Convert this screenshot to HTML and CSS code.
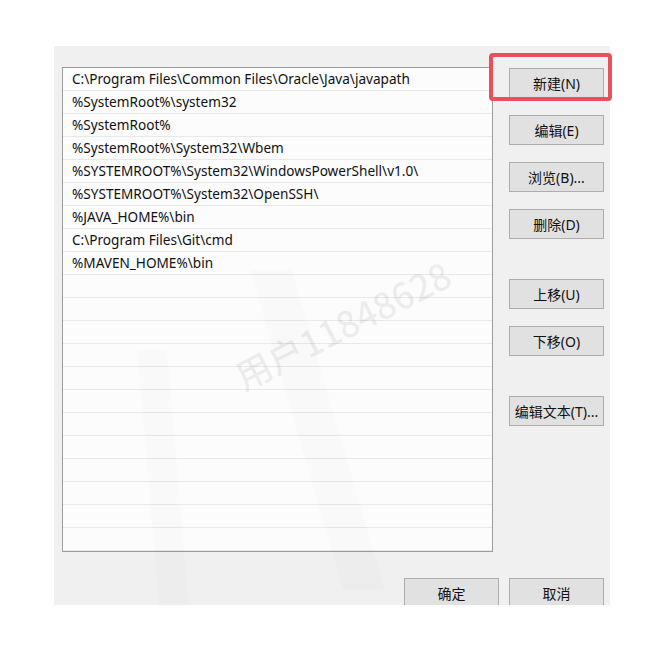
FILE: index.html
```html
<!DOCTYPE html>
<html lang="zh-CN">
<head>
  <meta charset="UTF-8">
  <title>编辑环境变量</title>
  <link rel="stylesheet" href="styles.css">
</head>
<body>

  <div class="dialog">
    <div class="main">
      <div class="list">
        <div class="row">C:\Program Files\Common Files\Oracle\Java\javapath</div>
        <div class="row">%SystemRoot%\system32</div>
        <div class="row">%SystemRoot%</div>
        <div class="row">%SystemRoot%\System32\Wbem</div>
        <div class="row">%SYSTEMROOT%\System32\WindowsPowerShell\v1.0\</div>
        <div class="row">%SYSTEMROOT%\System32\OpenSSH\</div>
        <div class="row">%JAVA_HOME%\bin</div>
        <div class="row">C:\Program Files\Git\cmd</div>
        <div class="row">%MAVEN_HOME%\bin</div>
        <div class="row"></div>
        <div class="row"></div>
        <div class="row"></div>
        <div class="row"></div>
        <div class="row"></div>
        <div class="row"></div>
        <div class="row"></div>
        <div class="row"></div>
        <div class="row"></div>
        <div class="row"></div>
        <div class="row"></div>
        <div class="row"></div>
      </div>

      <div class="side">
        <button>新建(N)</button>
        <button>编辑(E)</button>
        <button>浏览(B)...</button>
        <button>删除(D)</button>
        <button class="spaced">上移(U)</button>
        <button>下移(O)</button>
        <button class="spaced">编辑文本(T)...</button>
      </div>
    </div>

    <div class="footer">
      <button>确定</button>
      <button>取消</button>
    </div>

    <!-- 水印 -->
    <svg class="logo" width="556" height="559" viewBox="0 0 556 559">
      <polygon points="83,303 113,303 135,561 105,561" />
      <polygon points="196,224 238,224 331,544 289,544" />
    </svg>
    <div class="watermark">用户11848628</div>
  </div>

  <!-- 标注框 -->
  <div class="mark"></div>

</body>
</html>
```

FILE: styles.css
```css
body {
  margin: 0;
  background: #ffffff;
  font-family: 'Noto Sans', 'Noto Sans CJK SC', sans-serif;
  color: #111;
}

.dialog {
  position: relative;
  overflow: hidden;
  margin: 46px 0 0 54px;
  width: 556px;
  height: 559px;
  box-sizing: border-box;
  padding: 21px 6px 0 8px;
  background: #f0f0f0;
}

.main {
  display: flex;
  gap: 16px;
}

.list {
  width: 431px;
  height: 485px;
  box-sizing: border-box;
  overflow: hidden;
  border: 1px solid #9c9c9c;
  background: #fcfcfc;
}

.row {
  height: 22px;
  line-height: 22px;
  padding-left: 9px;
  border-bottom: 1px solid #e8e8e8;
  font-size: 13.6px;
  white-space: nowrap;
}

.side {
  width: 95px;
  padding-top: 1px;
  display: flex;
  flex-direction: column;
  gap: 17px;
}

.side .spaced {
  margin-top: 23px;
}

button {
  height: 30px;
  padding: 0;
  border: 1px solid #adadad;
  background: #e1e1e1;
  font-family: 'Noto Sans', 'Noto Sans CJK SC', sans-serif;
  font-size: 14px;
  color: #111;
}

.footer {
  display: flex;
  justify-content: flex-end;
  gap: 10px;
  margin-top: 26px;
}

.footer button {
  width: 95px;
}

.logo {
  position: absolute;
  left: 0;
  top: 0;
  fill: rgba(0, 0, 0, 0.012);
  pointer-events: none;
}

.watermark {
  position: absolute;
  left: 288px;
  top: 278px;
  transform: translate(-50%, -50%) rotate(-27deg);
  font-family: 'Noto Sans CJK SC', sans-serif;
  font-size: 36px;
  font-weight: 500;
  color: rgba(0, 0, 0, 0.07);
  white-space: nowrap;
  pointer-events: none;
}

.mark {
  position: absolute;
  left: 489px;
  top: 53px;
  width: 123px;
  height: 48px;
  box-sizing: border-box;
  border: 4px solid #e8505c;
  border-radius: 4px;
}
```
